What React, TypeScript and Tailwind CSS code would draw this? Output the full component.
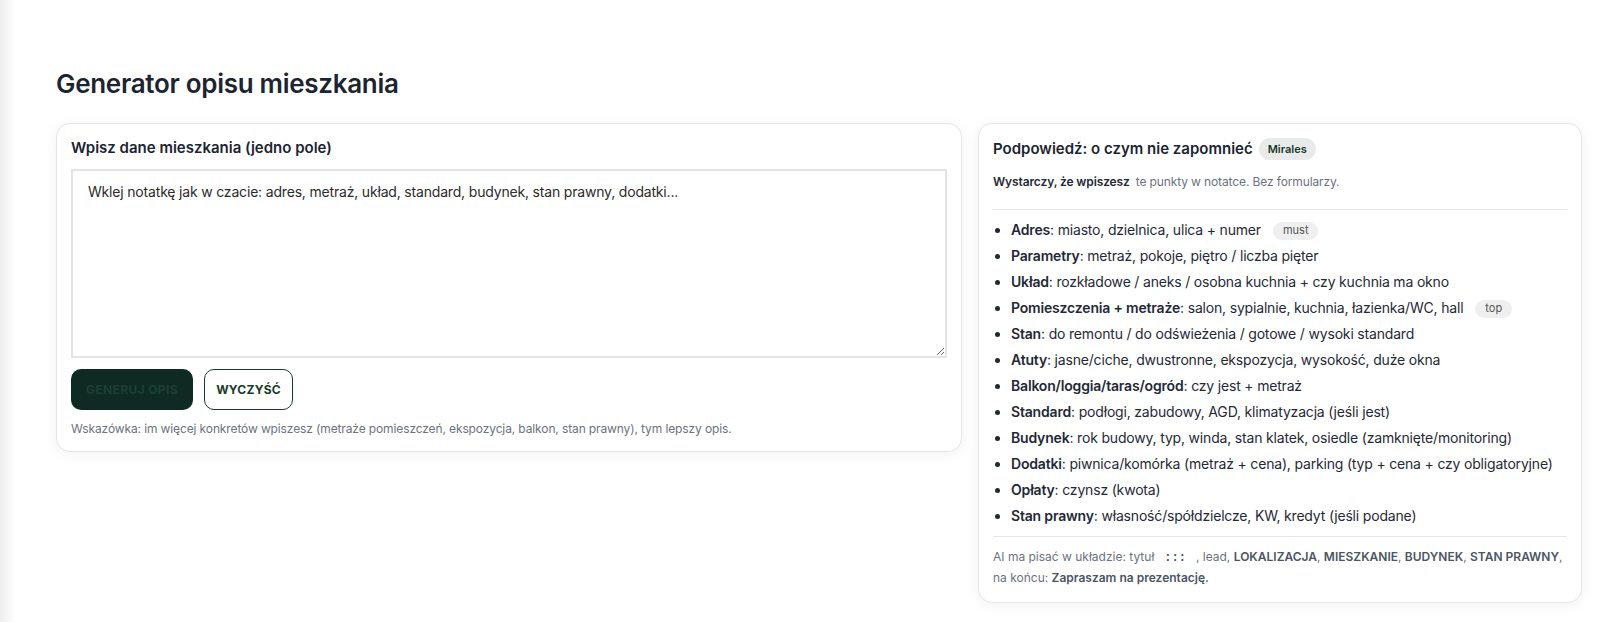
import React from "react";

const heading = "font-['Inter',_'Noto_Sans',_sans-serif]";

const items: { label: string; text: string; badge?: string }[] = [
  { label: "Adres", text: "miasto, dzielnica, ulica + numer", badge: "must" },
  { label: "Parametry", text: "metraż, pokoje, piętro / liczba pięter" },
  { label: "Układ", text: "rozkładowe / aneks / osobna kuchnia + czy kuchnia ma okno" },
  { label: "Pomieszczenia + metraże", text: "salon, sypialnie, kuchnia, łazienka/WC, hall", badge: "top" },
  { label: "Stan", text: "do remontu / do odświeżenia / gotowe / wysoki standard" },
  { label: "Atuty", text: "jasne/ciche, dwustronne, ekspozycja, wysokość, duże okna" },
  { label: "Balkon/loggia/taras/ogród", text: "czy jest + metraż" },
  { label: "Standard", text: "podłogi, zabudowy, AGD, klimatyzacja (jeśli jest)" },
  { label: "Budynek", text: "rok budowy, typ, winda, stan klatek, osiedle (zamknięte/monitoring)" },
  { label: "Dodatki", text: "piwnica/komórka (metraż + cena), parking (typ + cena + czy obligatoryjne)" },
  { label: "Opłaty", text: "czynsz (kwota)" },
  { label: "Stan prawny", text: "własność/spółdzielcze, KW, kredyt (jeśli podane)" },
];

export default function App() {
  return (
    <div className="flex min-h-screen bg-white font-['Inter',_sans-serif] text-[#1f2937]">
      <div className="w-[16px] shrink-0 self-stretch bg-linear-to-r from-[#eeeeee] to-white" />
      <main className="flex-1 pl-[40px] pr-[24px] pt-[68px]">
        <h1 className={`${heading} text-[26px] leading-8 font-semibold text-[#1b2430] tracking-[-0.3px]`}>
          Generator opisu mieszkania
        </h1>
        <div className="mt-[23px] grid grid-cols-[3fr_2fr] gap-4 items-start">
          {/* Left card */}
          <section className="rounded-[14px] border border-[#e6e6e6] bg-white p-3.5 shadow-[0_2px_14px_rgba(0,0,0,0.06)]">
            <h2 className={`${heading} text-[15px] leading-5 font-semibold text-[#1b2430]`}>
              Wpisz dane mieszkania (jedno pole)
            </h2>
            <textarea
              className="mt-[11px] block h-[189px] w-full border-2 border-[#e4e4e4] px-[15px] pt-[11px] text-[14px] leading-5 tracking-[-0.18px] text-[#2b2b2b] placeholder:text-[#2b2b2b] outline-none"
              placeholder="Wklej notatkę jak w czacie: adres, metraż, układ, standard, budynek, stan prawny, dodatki..."
            />
            <div className="mt-[11px] flex gap-[11px]">
              <button className="flex h-[41px] w-[122px] items-center justify-center rounded-[10px] bg-[#0e2a22] text-[12px] font-bold tracking-[0.03em] text-[#1c3f33]">
                GENERUJ OPIS
              </button>
              <button className="flex h-[41px] w-[89px] items-center justify-center rounded-[10px] border border-[#183a2d] bg-white text-[12px] font-bold tracking-[0.02em] text-[#183a2d]">
                WYCZYŚĆ
              </button>
            </div>
            <p className="mt-[11px] text-[12px] leading-4 tracking-[-0.12px] text-[#6b7280]">
              Wskazówka: im więcej konkretów wpiszesz (metraże pomieszczeń, ekspozycja, balkon, stan prawny), tym lepszy opis.
            </p>
          </section>

          {/* Right card */}
          <section className="rounded-[14px] border border-[#e6e6e6] bg-white p-3.5 shadow-[0_2px_14px_rgba(0,0,0,0.06)]">
            <div className="flex h-[22px] items-center gap-[6px]">
              <h2 className={`${heading} text-[15px] leading-5 font-semibold text-[#1b2430]`}>
                Podpowiedź: o czym nie zapomnieć
              </h2>
              <span className={`${heading} flex h-[22px] items-center rounded-full bg-[#e8ebe9] px-[9px] text-[11px] font-semibold text-[#17382b]`}>
                Mirales
              </span>
            </div>
            <p className="mt-[14px] text-[12px] leading-4 tracking-[-0.12px]">
              <span className="font-semibold text-[#1f2937]">Wystarczy, że wpiszesz</span>
              <span className="ml-[6px] text-[#6b7280]">te punkty w notatce. Bez formularzy.</span>
            </p>
            <div className="mt-[19px] border-t border-[#e5e7eb]" />
            <ul className="mt-[10px] flex list-disc flex-col gap-[6px] pl-[18px] text-[14px] leading-5 tracking-[-0.18px] text-[#1f2937]">
              {items.map((it) => (
                <li key={it.label}>
                  <span className="font-semibold">{it.label}</span>: {it.text}
                  {it.badge && (
                    <span className="ml-[12px] inline-flex h-[18px] items-center rounded-full bg-[#efefef] px-[10px] align-[1px] text-[11px] leading-none tracking-normal text-[#555]">
                      {it.badge}
                    </span>
                  )}
                </li>
              ))}
            </ul>
            <div className="mt-[10px] border-t border-[#e5e7eb]" />
            <p className="mt-[10px] text-[12px] leading-5 text-[#6b7280]">
              AI ma pisać w układzie: tytuł
              <span className="mx-[6px] px-[4px] font-['Liberation_Mono',_monospace] font-bold text-[#4b5563]">:::</span>, lead,{" "}
              <span className="font-semibold text-[#4b5563]">LOKALIZACJA</span>,{" "}
              <span className="font-semibold text-[#4b5563]">MIESZKANIE</span>,{" "}
              <span className="font-semibold text-[#4b5563]">BUDYNEK</span>,{" "}
              <span className="font-semibold text-[#4b5563]">STAN PRAWNY</span>,
              <br />
              na końcu: <span className="font-semibold text-[#4b5563]">Zapraszam na prezentację.</span>
            </p>
          </section>
        </div>
      </main>
    </div>
  );
}
